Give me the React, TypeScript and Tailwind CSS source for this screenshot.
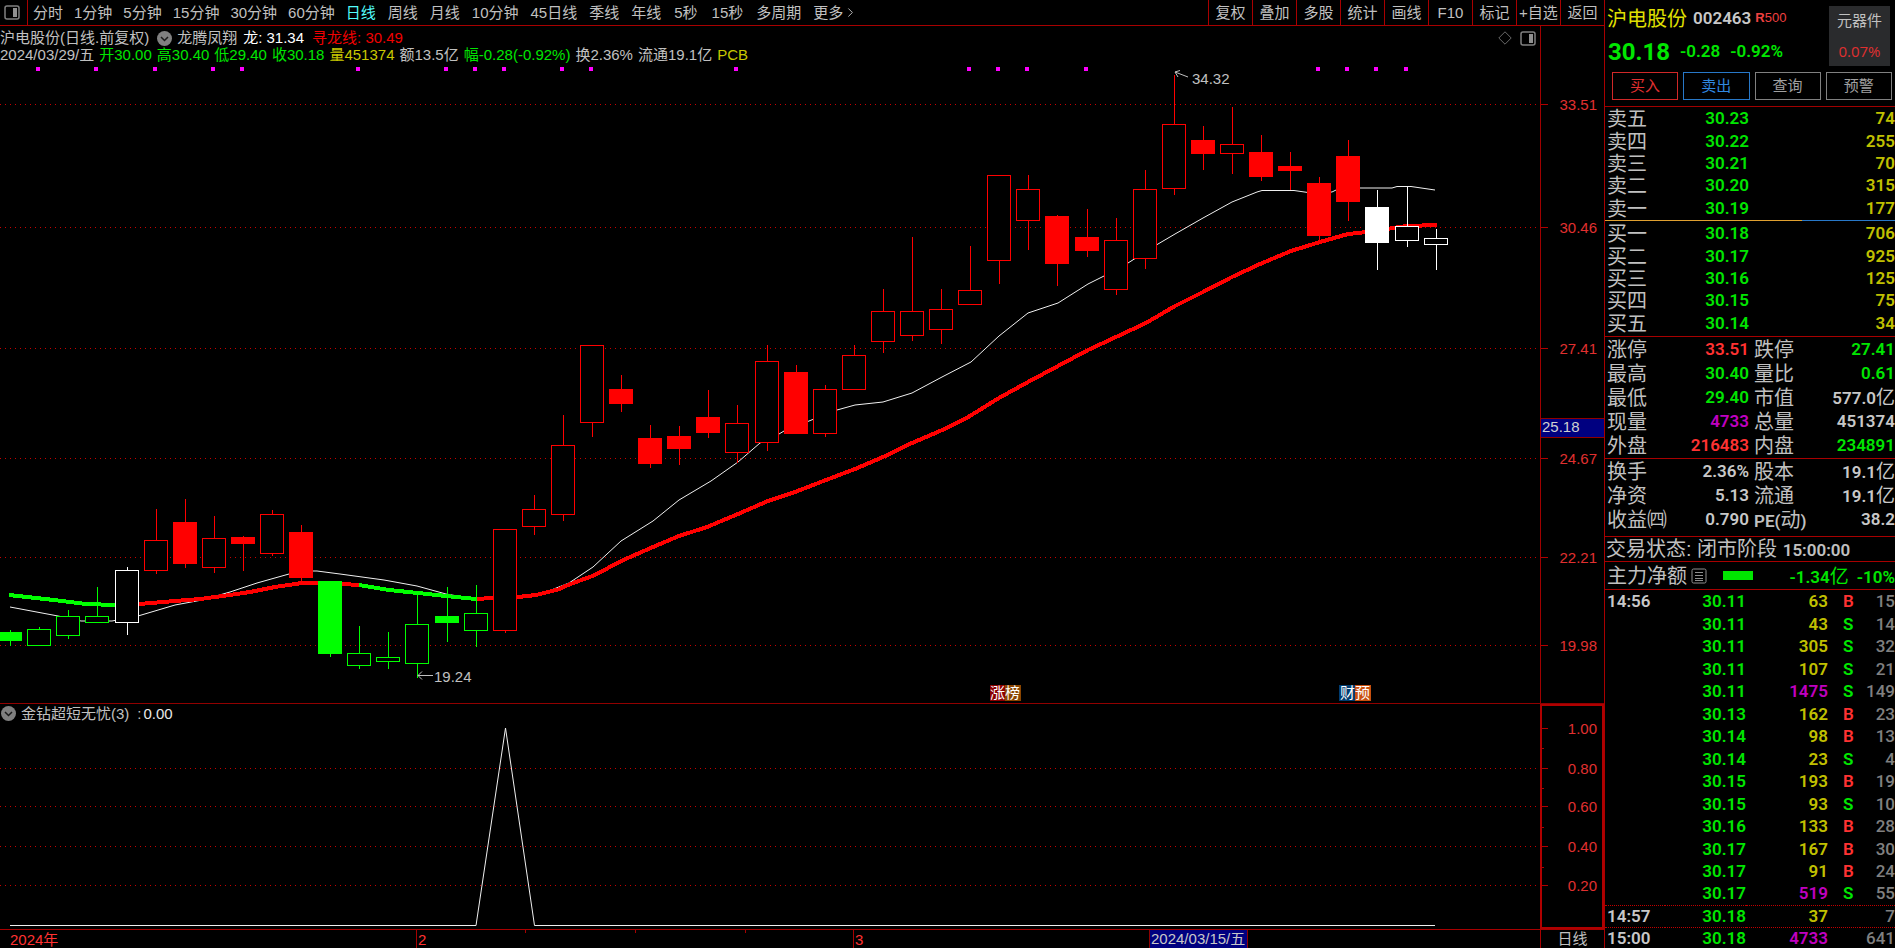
import React from 'react';
import { ChevronRight } from 'lucide-react';
import clsx from 'clsx';

type Tone = 'up' | 'down' | 'flat';

// [high, body top, body bottom, low, tone, filled]
type Candle = [number, number, number, number, Tone, boolean];

const STEP = 29.09;
const FIRST_X = 10.2;

const TONES: Record<Tone, string> = {
  up: '#ff0000',
  down: '#00ff00',
  flat: '#ffffff',
};

const INTRADAY = ['分时', '1分钟', '5分钟', '15分钟', '30分钟', '60分钟'];

const PERIODS = ['日线', '周线', '月线', '10分钟', '45日线', '季线', '年线', '5秒', '15秒', '多周期', '更多'];

const TOOLS = ['复权', '叠加', '多股', '统计', '画线', 'F10', '标记', '+自选', '返回'];

const CANDLES: Candle[] = [
  [630, 632, 640, 645, 'down', true],
  [627, 629, 645, 645, 'down', false],
  [610, 616, 635, 638, 'down', false],
  [587, 616, 622, 622, 'down', false],
  [567, 570, 622, 634, 'flat', false],
  [509, 540, 570, 573, 'up', false],
  [499, 522, 563, 567, 'up', true],
  [516, 538, 567, 572, 'up', false],
  [536, 537, 543, 570, 'up', true],
  [510, 514, 553, 555, 'up', false],
  [525, 532, 577, 582, 'up', true],
  [581, 581, 653, 656, 'down', true],
  [626, 653, 665, 668, 'down', false],
  [632, 657, 661, 668, 'down', false],
  [594, 624, 663, 677, 'down', false],
  [587, 616, 622, 641, 'down', true],
  [585, 613, 630, 646, 'down', false],
  [529, 529, 630, 632, 'up', false],
  [495, 509, 526, 534, 'up', false],
  [415, 445, 514, 520, 'up', false],
  [345, 345, 422, 436, 'up', false],
  [375, 389, 403, 411, 'up', true],
  [425, 438, 463, 467, 'up', true],
  [426, 436, 448, 464, 'up', true],
  [390, 417, 432, 437, 'up', true],
  [405, 423, 452, 462, 'up', false],
  [345, 361, 442, 450, 'up', false],
  [365, 372, 433, 433, 'up', true],
  [385, 389, 433, 436, 'up', false],
  [345, 355, 389, 389, 'up', false],
  [289, 311, 341, 352, 'up', false],
  [237, 311, 335, 340, 'up', false],
  [289, 309, 329, 343, 'up', false],
  [246, 290, 304, 304, 'up', false],
  [175, 175, 260, 283, 'up', false],
  [175, 189, 220, 249, 'up', false],
  [215, 216, 263, 285, 'up', true],
  [209, 237, 250, 256, 'up', true],
  [218, 240, 289, 294, 'up', false],
  [170, 189, 258, 268, 'up', false],
  [75, 124, 188, 194, 'up', false],
  [126, 140, 153, 169, 'up', true],
  [107, 144, 153, 173, 'up', false],
  [135, 152, 176, 180, 'up', true],
  [152, 166, 170, 189, 'up', true],
  [177, 183, 235, 242, 'up', true],
  [140, 156, 201, 220, 'up', true],
  [190, 207, 242, 269, 'flat', true],
  [187, 226, 240, 246, 'flat', false],
  [229, 238, 244, 269, 'flat', false],
];

const SIGNALS = [1, 3, 5, 7, 8, 12, 15, 16, 17, 19, 20, 25, 33, 34, 35, 37, 45, 46, 47, 48];

const FAST_LINE =
  '10,607 58,616 81,621 112,621 138,616 175,605 202,600 230,592 257,583 289,574 302,571 317,571 340,574 384,580 417,586 446,594 475,599 505,599 536,596 569,583 593,567 621,541 653,521 679,500 711,481 738,462 760,443 779,434 784,431 814,419 837,410 855,405 883,402 912,393 942,377 971,362 999,336 1028,313 1058,303 1088,284 1104,276 1128,263 1158,244 1175,234 1203,218 1232,202 1257,192 1262,190.500 1294,190.500 1308,192.500 1332,192 1336,190 1360,188 1392,188 1397,186.500 1411,186.500 1435,190';

const TREND = [
  { color: TONES.down, points: '9,595 54,600 86,604 115,605 127,605' },
  { color: TONES.up, points: '127,605 139,604 175,601 200,599 230,595 250,592 275,587 302,583 320,583 342,584 359,585' },
  { color: TONES.down, points: '359,585 389,590 418,593 446,596 476,599' },
  { color: TONES.up, points: '476,599 493,598 518,597 536,595 560,589 568,585 595,575 621,561 653,547 679,536 707,527 738,514 768,501 795,492 826,480 855,469 883,457 912,443 940,431 965,419 999,398 1028,382 1058,366 1088,350 1116,337 1146,323 1175,306 1203,292 1232,277 1260,264 1291,251 1320,242 1348,234 1367,232 1393,228 1407,226 1437,225' },
];

const PRICE_TICKS = [
  { y: 104, label: '33.51' },
  { y: 227, label: '30.46' },
  { y: 348, label: '27.41' },
  { y: 458, label: '24.67' },
  { y: 557, label: '22.21' },
  { y: 645, label: '19.98' },
];

const SUB_TICKS = [
  { y: 728, label: '1.00' },
  { y: 768, label: '0.80' },
  { y: 806, label: '0.60' },
  { y: 846, label: '0.40' },
  { y: 885, label: '0.20' },
];

const QUOTE_LINE = [
  { text: '2024/03/29/五', color: 'text-[#c0c0c0]' },
  { text: '开30.00', color: 'text-[#00e600]' },
  { text: '高30.40', color: 'text-[#00e600]' },
  { text: '低29.40', color: 'text-[#00e600]' },
  { text: '收30.18', color: 'text-[#00e600]' },
  { text: '量451374', color: 'text-[#c8c800]' },
  { text: '额13.5亿', color: 'text-[#c0c0c0]' },
  { text: '幅-0.28(-0.92%)', color: 'text-[#00e600]' },
  { text: '换2.36%', color: 'text-[#c0c0c0]' },
  { text: '流通19.1亿', color: 'text-[#c0c0c0]' },
  { text: 'PCB', color: 'text-[#c8c800]' },
];

const ASKS = [
  ['卖五', '30.23', '74'],
  ['卖四', '30.22', '255'],
  ['卖三', '30.21', '70'],
  ['卖二', '30.20', '315'],
  ['卖一', '30.19', '177'],
];

const BIDS = [
  ['买一', '30.18', '706'],
  ['买二', '30.17', '925'],
  ['买三', '30.16', '125'],
  ['买四', '30.15', '75'],
  ['买五', '30.14', '34'],
];

const GREEN = 'text-[#00e600]';
const RED = 'text-[#ff3232]';
const GRAY = 'text-[#c8c8c8]';
const PURPLE = 'text-[#c000c0]';

const STATS = [
  ['涨停', '33.51', RED, '跌停', '27.41', GREEN],
  ['最高', '30.40', GREEN, '量比', '0.61', GREEN],
  ['最低', '29.40', GREEN, '市值', '577.0亿', GRAY],
  ['现量', '4733', PURPLE, '总量', '451374', GRAY],
  ['外盘', '216483', RED, '内盘', '234891', GREEN],
];

const FUNDAMENTALS = [
  ['换手', '2.36%', GRAY, '股本', '19.1亿', GRAY],
  ['净资', '5.13', GRAY, '流通', '19.1亿', GRAY],
  ['收益㈣', '0.790', GRAY, 'PE(动)', '38.2', GRAY],
];

const TRADES = [
  ['14:56', '30.11', '63', 'B', '15'],
  ['', '30.11', '43', 'S', '14'],
  ['', '30.11', '305', 'S', '32'],
  ['', '30.11', '107', 'S', '21'],
  ['', '30.11', '1475', 'S', '149'],
  ['', '30.13', '162', 'B', '23'],
  ['', '30.14', '98', 'B', '13'],
  ['', '30.14', '23', 'S', '4'],
  ['', '30.15', '193', 'B', '19'],
  ['', '30.15', '93', 'S', '10'],
  ['', '30.16', '133', 'B', '28'],
  ['', '30.17', '167', 'B', '30'],
  ['', '30.17', '91', 'B', '24'],
  ['', '30.17', '519', 'S', '55'],
  ['14:57', '30.18', '37', '', '7'],
  ['15:00', '30.18', '4733', '', '641'],
];

const PanelIcon = () => (
  <svg width="16" height="15" viewBox="0 0 16 15" fill="none">
    <rect x="1" y="1" width="14" height="13" rx="2" stroke="#808080" strokeWidth="1.5" />
    <rect x="9" y="3" width="4" height="9" fill="#909090" />
  </svg>
);

const CollapseButton = ({ label }: { label: string }) => (
  <button aria-label={label} className="shrink-0">
    <svg width="15" height="15" viewBox="0 0 15 15">
      <circle cx="7.5" cy="7.5" r="7.5" fill="#808080" />
      <path d="M4 6l3.5 3.5L11 6" stroke="#1a1a1a" strokeWidth="1.5" fill="none" />
    </svg>
  </button>
);

const Toolbar = () => (
  <nav className="flex h-[26px] shrink-0 justify-between border-b border-[#a80000] text-[15px] leading-none text-[#c0c0c0]">
    <div className="flex items-center">
      <button aria-label="侧栏" className="flex h-full w-7 items-center border-r border-[#a80000] pl-1">
        <PanelIcon />
      </button>
      <div className="ml-[5px] flex items-center gap-[11px]">
        {INTRADAY.map((name) => (
          <button key={name} className="whitespace-nowrap">
            {name}
          </button>
        ))}
      </div>
      <div className="ml-[11px] flex items-center gap-3">
        {PERIODS.map((name) => (
          <button
            key={name}
            className={clsx(
              'flex items-center whitespace-nowrap',
              name === '日线' && 'text-[#54fcfc]',
              name.endsWith('秒') && 'px-px',
            )}
          >
            {name}
            {name === '更多' && <ChevronRight size={15} strokeWidth={1.5} />}
          </button>
        ))}
      </div>
    </div>
    <div className="flex">
      {TOOLS.map((name) => (
        <button key={name} className="w-11 whitespace-nowrap border-l border-[#a80000] text-center">
          {name}
        </button>
      ))}
    </div>
  </nav>
);

const ChartLegend = () => (
  <div className="flex h-[38px] shrink-0 justify-between pt-[3px] text-[15px]">
    <div className="whitespace-nowrap">
      <div className="flex h-[18px] items-center leading-[18px] text-[#c0c0c0]">
        <span>沪电股份(日线.前复权)</span>
        <span className="ml-2 mr-[5px] flex">
          <CollapseButton label="主图指标" />
        </span>
        <span>龙腾凤翔</span>
        <span className="ml-1.5 text-white">龙: 31.34</span>
        <span className="ml-2 text-[#f00000]">寻龙线: 30.49</span>
      </div>
      <div className="flex h-4 items-center gap-[5px] leading-4">
        {QUOTE_LINE.map((item) => (
          <span key={item.text} className={item.color}>
            {item.text}
          </span>
        ))}
      </div>
    </div>
    <div className="flex h-[18px] items-center gap-2 pr-1">
      <button aria-label="标记点">
        <svg width="14" height="14" viewBox="0 0 14 14" fill="none" stroke="#686868">
          <path d="M7 .8L13.2 7L7 13.2L.8 7z" />
        </svg>
      </button>
      <button aria-label="右侧栏">
        <PanelIcon />
      </button>
    </div>
  </div>
);

const CandleShape = ({ candle, index }: { candle: Candle; index: number }) => {
  const [high, top, bottom, low, tone, filled] = candle;
  const x = Math.round(FIRST_X + STEP * index) + 0.5;
  const color = TONES[tone];
  return (
    <g stroke={color} shapeRendering="crispEdges">
      <line x1={x} x2={x} y1={high} y2={low + 1} />
      <rect x={x - 12} y={top + 0.5} width={23} height={bottom - top} fill={filled ? color : '#000'} />
    </g>
  );
};

const GridLine = ({ y }: { y: number }) => (
  <line x1="0" x2="1540" y1={y + 0.5} y2={y + 0.5} stroke="#c80000" strokeDasharray="1 4" shapeRendering="crispEdges" />
);

const PriceChart = () => (
  <svg viewBox="0 64 1540 639" preserveAspectRatio="xMinYMin meet" className="min-h-0 w-full flex-1">
    {PRICE_TICKS.map((tick) => (
      <GridLine key={tick.y} y={tick.y} />
    ))}
    {SIGNALS.map((i) => (
      <rect key={i} x={Math.round(FIRST_X + STEP * i) - 3} y="67" width="4" height="4" fill="#ff00ff" />
    ))}
    <polyline points={FAST_LINE} fill="none" stroke="#f0f0f0" />
    {TREND.map((part) => (
      <polyline key={part.points} points={part.points} fill="none" stroke={part.color} strokeWidth="4" shapeRendering="crispEdges" />
    ))}
    {CANDLES.map((candle, i) => (
      <CandleShape key={i} candle={candle} index={i} />
    ))}
    <g fill="none" stroke="#c0c0c0">
      <path d="M1188 77L1175 72M1180 70.500L1175 72L1178 77" />
      <path d="M433 675.500H418M422 671.500L418 675.500L422 679.500" />
    </g>
    <g fontSize="15" fill="#c0c0c0">
      <text x="1192" y="84">34.32</text>
      <text x="434" y="682">19.24</text>
    </g>
    <g fontSize="15" fill="#fff">
      <rect x="990" y="685" width="15" height="16" fill="#8b0000" />
      <rect x="1005" y="685" width="16" height="16" fill="#8b4500" />
      <text x="990" y="698">涨榜</text>
      <rect x="1339" y="685" width="16" height="16" fill="#003c70" />
      <rect x="1355" y="685" width="16" height="16" fill="#c8500f" />
      <text x="1340" y="698">财预</text>
    </g>
  </svg>
);

const PriceAxis = () => (
  <svg viewBox="1541 26 63 677" preserveAspectRatio="xMinYMin meet" className="w-16 shrink-0 border-l border-[#a00000]">
    <g fontSize="15" fill="#e03030" textAnchor="end">
      {PRICE_TICKS.map((tick) => (
        <React.Fragment key={tick.y}>
          <line x1="1541" x2="1548" y1={tick.y + 0.5} y2={tick.y + 0.5} stroke="#b00000" />
          <text x="1597" y={tick.y + 6}>
            {tick.label}
          </text>
        </React.Fragment>
      ))}
    </g>
    <rect x="1540" y="418.500" width="66" height="19" fill="#000080" stroke="#900000" />
    <text x="1542" y="432" fontSize="15" fill="#d0d0d0">
      25.18
    </text>
  </svg>
);

const SubChart = () => (
  <section className="flex h-[225px] shrink-0">
    <div className="flex min-w-0 flex-1 flex-col">
      <div className="flex h-[19px] shrink-0 items-center whitespace-nowrap pl-px text-[15px] leading-[19px] text-[#c0c0c0]">
        <CollapseButton label="副图指标" />
        <span className="ml-[5px]">金钻超短无忧(3)</span>
        <span className="ml-2">:</span>
        <span className="ml-0.5 text-[#e8e8e8]">0.00</span>
      </div>
      <svg viewBox="0 723 1540 206" preserveAspectRatio="xMinYMin meet" className="min-h-0 w-full flex-1">
        {SUB_TICKS.slice(1).map((tick) => (
          <GridLine key={tick.y} y={tick.y} />
        ))}
        <polyline points="10,925.500 476,925.500 505.500,728 534.500,925.500 1435,925.500" fill="none" stroke="#f0f0f0" />
      </svg>
    </div>
    <svg viewBox="1542 706 60 221" className="w-16 shrink-0 border-2 border-[#b00000]">
      <g fontSize="15" fill="#e03030" stroke="none" textAnchor="end">
        {SUB_TICKS.map((tick) => (
          <text key={tick.y} x="1597" y={tick.y + 6}>
            {tick.label}
          </text>
        ))}
      </g>
      <g stroke="#b00000">
        {SUB_TICKS.map((tick) => (
          <line key={tick.y} x1="1542" x2="1548" y1={tick.y + 0.5} y2={tick.y + 0.5} />
        ))}
        {[748, 788, 827, 867].map((y) => (
          <line key={y} x1="1542" x2="1544" y1={y + 0.5} y2={y + 0.5} />
        ))}
      </g>
    </svg>
  </section>
);

const TimeAxis = () => (
  <div className="flex h-[19px] shrink-0 border-t border-[#a80000]">
    <svg viewBox="0 930 1540 18" preserveAspectRatio="xMinYMin meet" className="min-w-0 flex-1">
      <g stroke="#a80000">
        <path d="M416.500 930V948M853.500 930V948" />
        <path d="M525.500 930V933M635.500 930V933M745.500 930V933" />
      </g>
      <g fontSize="15" fill="#ff3232">
        <text x="10" y="945">2024年</text>
        <text x="418" y="945">2</text>
        <text x="855" y="945">3</text>
      </g>
      <rect x="1149.500" y="929" width="98" height="20" fill="#000080" stroke="#900000" />
      <text x="1151" y="944" fontSize="15" fill="#c8c8c8">
        2024/03/15/五
      </text>
    </svg>
    <button className="w-16 shrink-0 border-l border-[#a80000] text-[15px] leading-[18px] text-[#c0c0c0]">日线</button>
  </div>
);

// Digits are bold, the trailing unit keeps the regular label face
const Amount = ({ value }: { value: string }) => {
  const unit = value.endsWith('亿') ? '亿' : '';
  return (
    <>
      <span className="font-['Roboto'] text-[17px] leading-none font-semibold">{value.replace('亿', '')}</span>
      {unit && <span className="text-[19px] leading-none">{unit}</span>}
    </>
  );
};

const DepthTable = ({ rows, label }: { rows: string[][]; label: string }) => (
  <table aria-label={label} className="h-[112px] w-full table-fixed border-collapse leading-5">
    <tbody>
      {rows.map(([name, price, volume]) => (
        <tr key={name}>
          <th scope="row" className="w-[61px] p-0 pl-0.5 text-left text-xl leading-5 font-normal text-[#c0c0c0]">
            {name}
          </th>
          <td className="w-[83px] p-0 text-right text-[#00e600]">
            <Amount value={price} />
          </td>
          <td className="p-0 text-right text-[#c0c000]">
            <Amount value={volume} />
          </td>
        </tr>
      ))}
    </tbody>
  </table>
);

const StatsTable = ({ rows, label }: { rows: string[][]; label: string }) => (
  <table aria-label={label} className="w-full table-fixed border-collapse leading-5">
    <tbody>
      {rows.map(([name, value, tone, name2, value2, tone2]) => (
        <tr key={name} className="h-6">
          <th scope="row" className="w-[63px] whitespace-nowrap p-0 pl-0.5 text-left text-xl leading-5 font-normal text-[#c0c0c0]">
            {name}
          </th>
          <td className={clsx('w-[81px] p-0 text-right', tone)}>
            <Amount value={value} />
          </td>
          <th scope="row" className="w-[63px] whitespace-nowrap p-0 pl-[5px] text-left text-xl leading-5 font-normal text-[#c0c0c0]">
            {name2.startsWith('PE') ? (
              <>
                <Amount value="PE(" />
                动
                <Amount value=")" />
              </>
            ) : (
              name2
            )}
          </th>
          <td className={clsx('whitespace-nowrap p-0 text-right', tone2)}>
            <Amount value={value2} />
          </td>
        </tr>
      ))}
    </tbody>
  </table>
);

const TradeTable = () => (
  <table
    aria-label="分笔成交"
    className="w-full shrink-0 table-fixed border-collapse font-['Roboto'] text-[17px] leading-4 font-semibold"
  >
    <tbody>
      {TRADES.map(([time, price, volume, side, count], i) => (
        <tr
          key={i}
          className={clsx(i >= 14 ? 'h-[22px] border-t border-dotted border-[#c00000]' : 'odd:h-[22px] even:h-[23px]')}
        >
          <td className="w-[60px] p-0 pl-0.5 text-[#c8c8c8]">{time}</td>
          <td className="w-[81px] p-0 text-right text-[#00e600]">{price}</td>
          <td className={clsx('w-[82px] p-0 text-right', Number(volume) >= 500 ? 'text-[#c000c0]' : 'text-[#c0c000]')}>
            {volume}
          </td>
          <td className={clsx('w-8 p-0 pl-[15px] text-left', side === 'B' ? 'text-[#ff3232]' : 'text-[#00e600]')}>
            {side}
          </td>
          <td className="p-0 text-right font-medium text-[#808080]">{count}</td>
        </tr>
      ))}
    </tbody>
  </table>
);

const ACTIONS = [
  { name: '买入', style: 'border-[#d02828] text-[#e03030]' },
  { name: '卖出', style: 'border-[#2878c8] text-[#3088e0]' },
  { name: '查询', style: 'border-[#808080] text-[#a0a0a0]' },
  { name: '预警', style: 'border-[#808080] text-[#a0a0a0]' },
];

const QuotePanel = () => (
  <aside className="flex h-full w-[291px] shrink-0 flex-col overflow-hidden border-l border-[#a80000]">
    <header className="flex h-[66px] shrink-0 justify-between pr-[5px]">
      <div>
        <div className="flex h-[38px] items-center whitespace-nowrap pl-0.5">
          <h1 className="text-xl leading-6 text-[#e0e000]">沪电股份</h1>
          <span className="ml-1.5 font-['Roboto'] text-[17px] font-semibold text-[#c8c8c8]">002463</span>
          <span className="mb-1 ml-1 text-[13px] leading-none text-[#f04040]">
            <b>R</b>500
          </span>
        </div>
        <div className="flex h-7 items-center whitespace-nowrap pl-[3px] font-['Roboto'] font-semibold text-[#00e600]">
          <span className="text-2xl font-bold">30.18</span>
          <span className="ml-2.5 text-[17px]">-0.28</span>
          <span className="ml-2.5 text-[17px]">-0.92%</span>
        </div>
      </div>
      <button className="mt-1.5 flex h-[60px] w-[61px] flex-col items-center justify-around bg-[#2a2b2d] text-[15px] leading-5 text-[#c0c0c0]">
        <span>元器件</span>
        <span className="font-['Open_Sans'] text-[#e03030]">0.07%</span>
      </button>
    </header>
    <div className="flex h-[41px] shrink-0 gap-[5px] border-b border-[#a00000] pt-1.5 pr-[3px] pl-[7px]">
      {ACTIONS.map((action) => (
        <button key={action.name} className={clsx('h-7 flex-1 border pb-0.5 text-[15px] leading-none', action.style)}>
          {action.name}
        </button>
      ))}
    </div>
    <div className="shrink-0 pt-px">
      <DepthTable rows={ASKS} label="卖盘" />
    </div>
    {/* ask / bid balance */}
    <div className="flex h-px shrink-0">
      <div className="w-[197px] bg-[#e0a030]" />
      <div className="flex-1 bg-[#2878c8]" />
    </div>
    <div className="shrink-0 border-b border-[#a80000] pt-0.5 pb-px">
      <DepthTable rows={BIDS} label="买盘" />
    </div>
    <div className="shrink-0 border-b border-[#a80000] pt-px">
      <StatsTable rows={STATS} label="盘口" />
    </div>
    <div className="shrink-0 border-b border-[#a80000] pt-px pb-1">
      <StatsTable rows={FUNDAMENTALS} label="基本面" />
    </div>
    <div className="h-[25px] shrink-0 whitespace-nowrap border-b border-[#a80000] pl-px text-xl leading-6 text-[#c0c0c0]">
      交易状态: 闭市阶段 <Amount value="15:00:00" />
    </div>
    <div className="flex h-7 shrink-0 items-center whitespace-nowrap border-b border-[#a80000] pl-0.5 text-xl leading-6 text-[#c0c0c0]">
      <span>主力净额</span>
      <svg width="16" height="16" viewBox="0 0 16 16" fill="none" stroke="#909090" className="ml-1">
        <rect x="1" y="1" width="14" height="14" rx="1.500" />
        <path d="M4 4.500H12M4 7.500H12M4 10.500H12M4 12.500H12" />
      </svg>
      <span className="ml-4 h-[9px] w-[30px] bg-[#00e600]" />
      <span className="ml-auto text-[#00e600]">
        <Amount value="-1.34亿" />
      </span>
      <span className="ml-2 text-[#00e600]">
        <Amount value="-10%" />
      </span>
    </div>
    <TradeTable />
  </aside>
);

export default function App() {
  return (
    <div className="flex h-screen overflow-hidden bg-black font-['Liberation_Sans','Noto_Sans_CJK_SC',sans-serif]">
      <main className="flex min-w-0 flex-1 flex-col">
        <Toolbar />
        <section className="flex min-h-0 flex-1 border-b border-[#900000]">
          <div className="flex min-w-0 flex-1 flex-col">
            <ChartLegend />
            <PriceChart />
          </div>
          <PriceAxis />
        </section>
        <SubChart />
        <TimeAxis />
      </main>
      <QuotePanel />
    </div>
  );
}
